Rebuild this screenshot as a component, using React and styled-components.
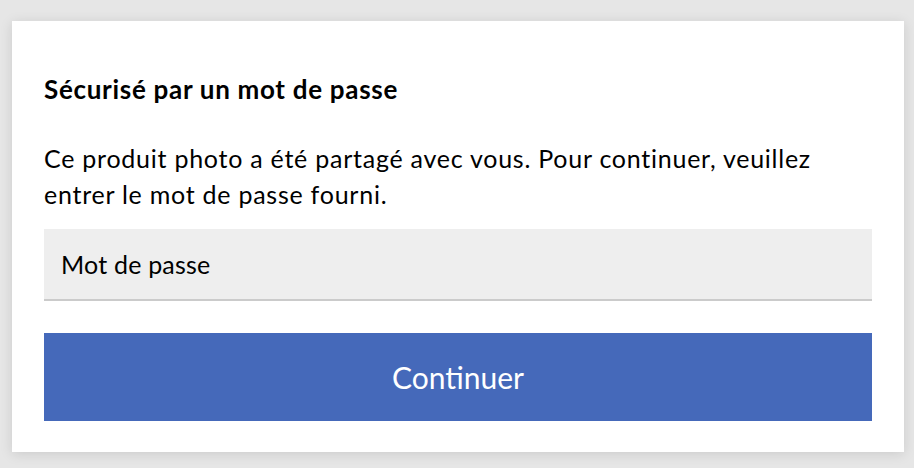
import React from "react";
import styled, { createGlobalStyle } from "styled-components";

const GlobalStyle = createGlobalStyle`
  html, body {
    margin: 0;
    padding: 0;
    background: #e6e6e6;
  }
  body {
    font-family: "Lato", "Open Sans", sans-serif;
    color: #000;
  }
`;

const Page = styled.div`
  width: 914px;
  height: 468px;
  padding: 21px 10px 16px 12px;
  box-sizing: border-box;
`;

const Card = styled.div`
  background: #fff;
  width: 892px;
  height: 431px;
  box-sizing: border-box;
  padding: 52px 32px 31px;
  box-shadow: 0 2px 12px rgba(0, 0, 0, 0.12);
  display: flex;
  flex-direction: column;
`;

const Title = styled.h2`
  margin: 0;
  font-size: 26px;
  font-weight: 700;
  letter-spacing: 0.7px;
  line-height: 32px;
`;

const Message = styled.p`
  margin: 35px 0 0;
  font-size: 25px;
  letter-spacing: 0.75px;
  line-height: 36px;
`;

const Field = styled.input`
  margin-top: 17px;
  height: 72px;
  box-sizing: border-box;
  border: none;
  border-bottom: 2px solid #cbcbcb;
  background: #eeeeee;
  padding: 0 17px;
  font-family: inherit;
  font-size: 25px;
  letter-spacing: 0.2px;
  color: #000;
  outline: none;

  &::placeholder {
    color: #000;
    opacity: 1;
  }
`;

const Button = styled.button`
  margin-top: 32px;
  height: 88px;
  border: none;
  background: #4569ba;
  color: #fff;
  font-family: inherit;
  font-size: 30px;
  cursor: pointer;
`;

const App = () => {
  return (
    <>
      <GlobalStyle />
      <Page>
        <Card>
          <Title>Sécurisé par un mot de passe</Title>
          <Message>
            Ce produit photo a été partagé avec vous. Pour continuer, veuillez
            entrer le mot de passe fourni.
          </Message>
          <Field type="password" placeholder="Mot de passe" />
          <Button>Continuer</Button>
        </Card>
      </Page>
    </>
  );
};

export default App;
